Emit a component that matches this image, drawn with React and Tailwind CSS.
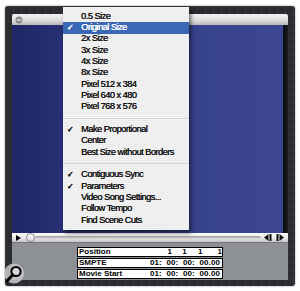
export default function App() {
  const groups = [
    [
      ["0.5 Size", false, false],
      ["Original Size", true, true],
      ["2x Size", false, false],
      ["3x Size", false, false],
      ["4x Size", false, false],
      ["8x Size", false, false],
      ["Pixel 512 x 384", false, false],
      ["Pixel 640 x 480", false, false],
      ["Pixel 768 x 576", false, false],
    ],
    [
      ["Make Proportional", true, false],
      ["Center", false, false],
      ["Best Size without Borders", false, false],
    ],
    [
      ["Contiguous Sync", true, false],
      ["Parameters", true, false],
      ["Video Song Settings...", false, false],
      ["Follow Tempo", false, false],
      ["Find Scene Cuts", false, false],
    ],
  ];
  const sans = { fontFamily: '"Liberation Sans", Arial, sans-serif' };
  return (
    <div className="relative w-[300px] h-[291px] bg-white overflow-hidden pt-[6px] pl-[5px]" style={sans}>
      <div className="w-[290px] h-[280px] rounded-[3px] bg-[#292b2f] bg-[linear-gradient(#34373c_1px,transparent_1px),linear-gradient(90deg,#34373c_1px,transparent_1px)] bg-[size:8px_8px] pt-[8px] pl-[7px] shadow-[0_0_2px_rgba(0,0,0,0.5)]">
        <div className="w-[276px] flex flex-col">
          {/* title bar */}
          <div className="h-[11px] bg-[linear-gradient(#f4f4f4,#dcdcdc_60%,#b8b8b8)] flex items-center pl-[3px] rounded-t-[2px]">
            <svg width="8" height="8" viewBox="0 0 8 8">
              <circle cx="4" cy="4" r="3.5" fill="#8a8a8a" />
              <rect x="1.8" y="3.4" width="4.4" height="1.4" fill="#e8e8e8" />
            </svg>
          </div>
          {/* video */}
          <div className="h-[208px] flex bg-[#0b0c10]">
            <div className="w-[271px] h-full bg-[linear-gradient(90deg,#1d2768,#2c3679_30%,#38438e_70%,#3c4693)]" />
            <div className="flex-1 bg-[linear-gradient(90deg,#0a0b10,#1c1d22)]" />
          </div>
          {/* controller */}
          <div className="h-[10px] bg-[linear-gradient(#fbfbfb,#e6e6e6_60%,#c4c4c4)] flex items-center pl-[4px] pr-[2px] border-b border-[#777]">
            <svg width="5" height="6" viewBox="0 0 5 6">
              <path d="M0 0 L5 3 L0 6 Z" fill="#000" />
            </svg>
            <div className="ml-[5px] w-[9px] h-[9px] rounded-full bg-[linear-gradient(#ffffff,#d8d8d8)] border border-[#8a8a8a] shrink-0" />
            <div className="w-[226px] h-[3px] bg-[linear-gradient(#9a9a9a,#e0e0e0)] rounded-[2px]" />
            <div className="ml-[3px] flex items-center gap-[4px]">
              <svg width="8" height="7" viewBox="0 0 8 7">
                <path d="M0 3.5 L4.5 0 L4.5 7 Z" fill="#111" />
                <rect x="5.5" y="0" width="2" height="7" fill="#111" />
              </svg>
              <svg width="8" height="7" viewBox="0 0 8 7">
                <rect x="0.5" y="0" width="2" height="7" fill="#111" />
                <path d="M3.5 0 L8 3.5 L3.5 7 Z" fill="#111" />
              </svg>
            </div>
          </div>
          {/* info panel */}
          <div className="h-[37px] bg-[#8d9095] pl-[65px] pt-[4px] flex flex-col gap-[1px]">
            <div className="w-[146px] h-[10px] bg-white border border-black flex items-center text-[8px] font-bold text-black leading-none">
              <span className="pl-[1px]">Position</span>
              <span className="ml-[54px] w-[8px] text-right">1</span>
              <span className="w-[16px] text-right">1</span>
              <span className="w-[17px] text-right">1</span>
              <span className="w-[21px] text-right">1</span>
            </div>
            <div className="w-[146px] h-[10px] bg-white border border-black flex items-center text-[8px] font-bold text-black leading-none">
              <span className="pl-[1px] w-[72px]">SMPTE</span>
              <span className="whitespace-pre tracking-[0.1px]">01:  00:  00:  00.00</span>
            </div>
            <div className="w-[146px] h-[10px] bg-white border border-black flex items-center text-[8px] font-bold text-black leading-none">
              <span className="pl-[1px] w-[72px]">Movie Start</span>
              <span className="whitespace-pre tracking-[0.1px]">01:  00:  00:  00.00</span>
            </div>
          </div>
        </div>
      </div>

      {/* menu */}
      <div className="absolute left-[63px] top-[7px] w-[126px] h-[223px] bg-[#f1f1f1] bg-[repeating-linear-gradient(#f3f3f3_0px,#f3f3f3_1px,#ebebeb_1px,#ebebeb_2px)] pt-[4px] shadow-[2px_3px_4px_rgba(0,0,0,0.55)] text-[9.3px] tracking-[-0.55px] text-[#111] [text-shadow:0.35px_0_0_currentColor]">
        {groups.map((g, gi) => (
          <div key={gi}>
            {gi > 0 && (
              <div className="h-[11.33px] flex items-center">
                <div className="w-full h-px bg-[#d4d4d4]" />
              </div>
            )}
            {g.map(([label, checked, hl]) => (
              <div
                key={label}
                className={
                  hl
                    ? "h-[11.33px] flex items-center bg-[#3a67b6] text-white"
                    : "h-[11.33px] flex items-center"
                }
              >
                <span className="w-[18px] pl-[4px] text-[8px] font-bold">{checked ? "✓" : ""}</span>
                <span className="whitespace-nowrap">{label}</span>
              </div>
            ))}
          </div>
        ))}
      </div>

      {/* magnifier */}
      <div className="absolute left-[3px] top-[261px]">
        <svg width="22" height="25" viewBox="0 0 22 25">
          <circle cx="11" cy="12.5" r="10" fill="#c9cacc" opacity="0.85" />
          <circle cx="13" cy="10.5" r="4.6" fill="#d8d8d8" stroke="#000" strokeWidth="2" />
          <path d="M9.8 13.8 L4 20" stroke="#000" strokeWidth="2.8" strokeLinecap="round" />
        </svg>
      </div>
    </div>
  );
}
